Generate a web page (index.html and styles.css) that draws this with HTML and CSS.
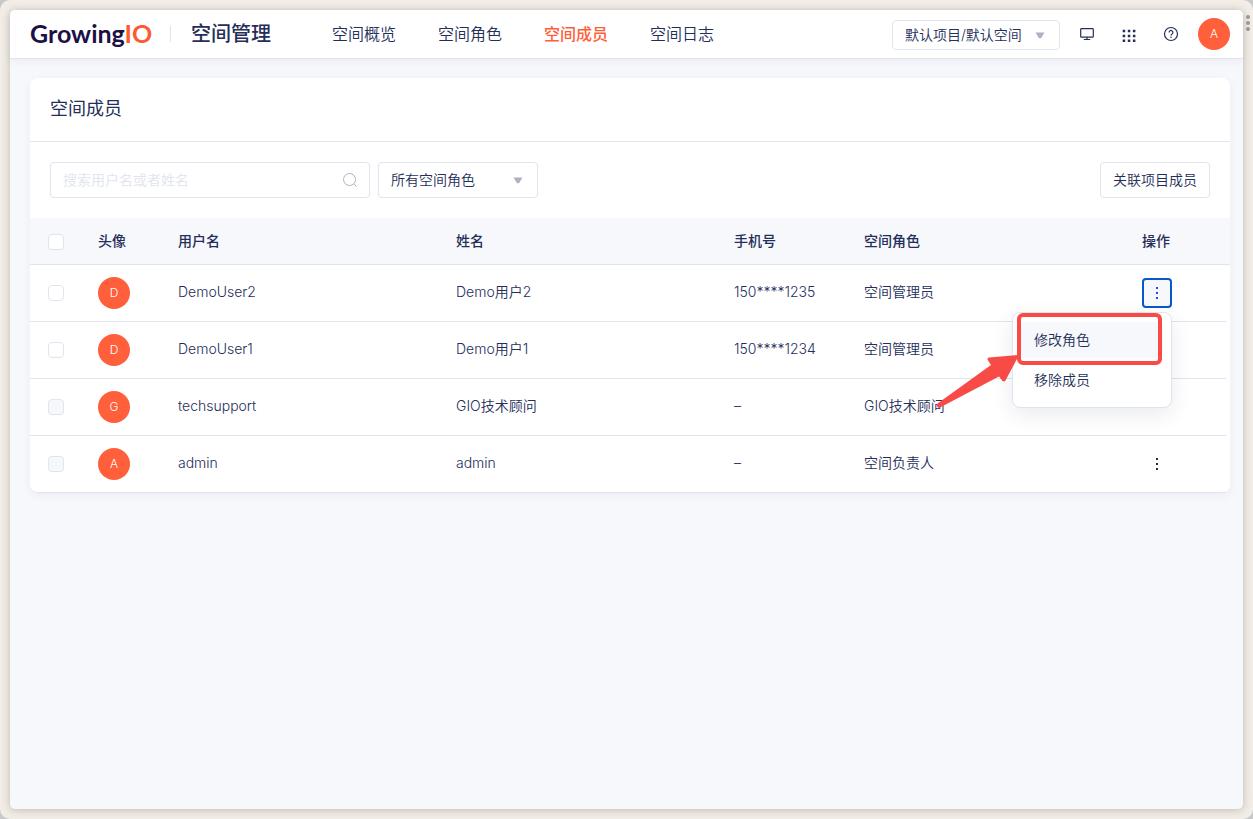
FILE: index.html
```html
<!DOCTYPE html>
<html lang="zh-CN">
<head>
<meta charset="utf-8">
<title>空间成员 - GrowingIO</title>
<link rel="stylesheet" href="styles.css">
</head>
<body>
<div class="frame">
  <svg class="frame-dots" width="4" height="18" viewBox="0 0 4 18" aria-hidden="true"><circle cx="2" cy="2" r="2"/><circle cx="2" cy="8" r="2"/><circle cx="2" cy="14" r="2"/></svg>
  <div class="window">
    <header class="topbar">
      <a class="logo" href="#">Growing<span class="logo-io">IO</span></a>
      <span class="product">空间管理</span>
      <nav class="nav">
        <a class="nav-link" href="#">空间概览</a>
        <a class="nav-link" href="#">空间角色</a>
        <a class="nav-link nav-active" href="#" aria-current="page">空间成员</a>
        <a class="nav-link" href="#">空间日志</a>
      </nav>
      <div class="tools">
        <span class="select-box project-select">
          <select class="select" aria-label="项目空间"><option>默认项目/默认空间</option></select>
          <svg class="caret" width="10" height="7" viewBox="0 0 10 7" aria-hidden="true"><path d="M.5.500h9L6 6.200H4z"/></svg>
        </span>
        <button class="icon-button" aria-label="大屏"><svg width="16" height="16" viewBox="0 0 16 16"><path class="line" d="M2.500 2.600h11a.8.8 0 0 1 .8.8v7a.8.8 0 0 1-.8.8h-11a.8.8 0 0 1-.8-.8v-7a.8.8 0 0 1 .8-.8zM8 11.200v2.300M4.800 13.500h6.400"/></svg></button>
        <button class="icon-button" aria-label="应用"><svg width="16" height="16" viewBox="0 0 16 16"><path class="solid" d="M1.700 3.700h2.500v2.500H1.700zM6.800 3.700h2.500v2.500H6.800zM11.900 3.700h2.500v2.500h-2.500zM1.700 8.700h2.500v2.500H1.700zM6.800 8.700h2.500v2.500H6.800zM11.900 8.700h2.500v2.500h-2.500zM1.700 13.400h2.500v2.500H1.700zM6.800 13.400h2.500v2.500H6.800zM11.900 13.400h2.500v2.500h-2.500z"/></svg></button>
        <button class="icon-button" aria-label="帮助"><svg width="16" height="16" viewBox="0 0 16 16"><circle class="line" cx="8" cy="8" r="6.500"/><path class="line" d="M6.100 6.400a1.900 1.900 0 1 1 2.900 1.600c-.7.400-1 .7-1 1.500"/><circle class="solid" cx="8" cy="11.200" r=".8"/></svg></button>
        <button class="avatar" aria-label="账户">A</button>
      </div>
    </header>
    <main class="content">
      <section class="card">
        <h1 class="card-title">空间成员</h1>
        <div class="filters">
          <label class="search">
            <input class="search-input" type="text" placeholder="搜索用户名或者姓名" aria-label="搜索用户名或者姓名">
            <svg width="16" height="16" viewBox="0 0 16 16" aria-hidden="true"><circle cx="7.500" cy="7.500" r="6"/><path d="M11.600 11.800l3 2.700"/></svg>
          </label>
          <span class="select-box role-select">
            <select class="select" aria-label="空间角色"><option>所有空间角色</option></select>
            <svg class="caret" width="10" height="7" viewBox="0 0 10 7" aria-hidden="true"><path d="M.5.500h9L6 6.200H4z"/></svg>
          </span>
          <button class="link-members">关联项目成员</button>
        </div>
        <table class="members">
          <colgroup><col class="col-check"><col class="col-avatar"><col><col><col class="col-phone"><col><col class="col-action"></colgroup>
          <thead>
            <tr><th class="check-cell"><input class="check" type="checkbox" aria-label="全选"></th><th>头像</th><th>用户名</th><th>姓名</th><th>手机号</th><th>空间角色</th><th>操作</th></tr>
          </thead>
          <tbody>
            <tr><td class="check-cell"><input class="check" type="checkbox" aria-label="选择 DemoUser2"></td><td class="avatar-cell"><span class="avatar">D</span></td><td>DemoUser2</td><td>Demo用户2</td><td>150****1235</td><td>空间管理员</td>
              <td><div class="action">
                <button class="more more-open" aria-label="更多操作" aria-expanded="true"><svg width="4" height="14" viewBox="0 0 4 14"><path d="M1 1h2v2H1zM1 6h2v2H1zM1 11h2v2H1z"/></svg></button>
                <div class="menu">
                  <button class="menu-item menu-hover">修改角色</button>
                  <button class="menu-item">移除成员</button>
                  <span class="callout"></span>
                  <svg class="arrow" width="84" height="56" viewBox="0 0 84 56" aria-hidden="true"><path d="M83 2L53 4.500q-2 .5-1.300 2.500l3.300 5L1.500 50.500q-2 3 1.500 4.500L63 23.500l3.500 4.500q2 1 3-.5z"/></svg>
                </div>
              </div></td></tr>
            <tr><td class="check-cell"><input class="check" type="checkbox" aria-label="选择 DemoUser1"></td><td class="avatar-cell"><span class="avatar">D</span></td><td>DemoUser1</td><td>Demo用户1</td><td>150****1234</td><td>空间管理员</td><td></td></tr>
            <tr><td class="check-cell"><input class="check" type="checkbox" disabled aria-label="选择 techsupport"></td><td class="avatar-cell"><span class="avatar">G</span></td><td>techsupport</td><td>GIO技术顾问</td><td>–</td><td>GIO技术顾问</td><td></td></tr>
            <tr><td class="check-cell"><input class="check" type="checkbox" disabled aria-label="选择 admin"></td><td class="avatar-cell"><span class="avatar">A</span></td><td>admin</td><td>admin</td><td>–</td><td>空间负责人</td>
              <td><div class="action"><button class="more" aria-label="更多操作"><svg width="4" height="14" viewBox="0 0 4 14"><path d="M1 1h2v2H1zM1 6h2v2H1zM1 11h2v2H1z"/></svg></button></div></td></tr>
          </tbody>
        </table>
      </section>
    </main>
  </div>
</div>
</body>
</html>
```
FILE: styles.css
```css
* { box-sizing: border-box; }

html { background: #c9c9c9; }

body {
  margin: 0;
  color: #242e59;
  font: 350 14px/20px Inter, "Noto Sans CJK SC", sans-serif;
}

button, input, select { font: inherit; color: inherit; }
button { padding: 0; border: 0; background: none; }
a { color: inherit; text-decoration: none; }

.frame {
  position: relative;
  display: flex;
  min-height: 100vh;
  padding: 10px;
  border-radius: 10px;
  background: #f2ede7;
}

.frame-dots { position: absolute; top: 15px; right: 3px; fill: #999793; }

.window {
  flex: 1;
  min-width: 0;
  border-radius: 5px;
  background: #f7f8fc;
  box-shadow: 0 1px 8px rgba(70, 55, 40, .28);
}

.topbar {
  display: flex;
  align-items: center;
  height: 49px;
  padding: 0 13px 0 20px;
  border-bottom: 1px solid #dfe4ee;
  border-radius: 5px 5px 0 0;
  background: #fff;
  box-shadow: 0 2px 8px rgba(36, 46, 89, .06);
}

.logo {
  width: 120px;
  padding-bottom: 2px;
  color: #1c1145;
  font: 700 25px/32px Lato, sans-serif;
  white-space: nowrap;
}
.logo-io { color: #fc5a30; }

.product {
  margin-left: 20px;
  padding-left: 20px;
  border-left: 1px solid #dfe4ee;
  font-size: 20px;
  font-weight: 500;
  line-height: 16px;
}

.nav { display: flex; gap: 42px; margin-left: 61px; font-size: 16px; line-height: 24px; }
.nav-active { color: #ff5f3a; font-weight: 500; }

.tools { display: flex; align-items: center; gap: 10px; margin-left: auto; }

.select-box { position: relative; display: block; }
.select {
  width: 100%;
  height: 100%;
  padding: 0 12px;
  border: 1px solid #dfe4ee;
  border-radius: 4px;
  background: #fff;
  appearance: none;
}
.caret { position: absolute; top: calc(50% - 3px); right: 15px; fill: #adb2c2; pointer-events: none; }
.project-select { width: 168px; height: 30px; margin: 2px 1px 0 0; }
.role-select { width: 160px; height: 36px; }

.icon-button { display: grid; place-items: center; width: 32px; height: 32px; }
.line { fill: none; stroke: #242e59; stroke-width: 1.2; }
.solid { fill: #242e59; }

.avatar {
  display: grid;
  place-items: center;
  width: 32px;
  height: 32px;
  border-radius: 50%;
  background: #ff5f3a;
  color: #fff;
  font-size: 12px;
}
.icon-button + .avatar { margin-left: 1px; }

.content { padding: 19px 13px 20px 20px; }

.card {
  border-radius: 8px;
  background: #fff;
  box-shadow: 0 2px 10px rgba(36, 46, 89, .06);
}

.card-title {
  margin: 0;
  padding: 18px 20px 19px;
  border-bottom: 1px solid #dfe4ee;
  font-size: 18px;
  font-weight: 400;
  line-height: 26px;
}

.filters { display: flex; gap: 8px; padding: 20px; }

.search {
  display: flex;
  align-items: center;
  width: 320px;
  height: 36px;
  padding: 0 11px 0 12px;
  border: 1px solid #dfe4ee;
  border-radius: 4px;
}
.search-input { flex: 1; min-width: 0; padding: 0; border: 0; outline: 0; background: none; }
.search-input::placeholder { color: #dfe4ee; }
.search svg { fill: none; stroke: #adb2c2; }

.link-members {
  height: 36px;
  margin-left: auto;
  padding: 0 12px;
  border: 1px solid #dfe4ee;
  border-radius: 4px;
}

.members { width: 100%; border-spacing: 0; table-layout: fixed; }
.col-check { width: 52px; }
.col-avatar { width: 80px; }
.col-phone { width: 130px; }
.col-action { width: 104px; }

.members th, .members td { padding: 0 16px; text-align: left; }
.members th {
  height: 47px;
  border-bottom: 1px solid #dfe4ee;
  background: #f7f8fc;
  font-weight: 500;
}
.members td {
  height: 57px;
  padding-bottom: 2px;
  border-bottom: 1px solid #dfe4ee;
}
.members td:last-child {
  border-bottom: 0;
  background: linear-gradient(#dfe4ee, #dfe4ee) left bottom / calc(100% - 4px) 1px no-repeat;
}
.members tr:last-child td:first-child { border-bottom-left-radius: 8px; }
.members .avatar-cell { padding-bottom: 0; }
.members .check-cell { padding: 0 0 0 18px; }
.members th.check-cell { padding-top: 2px; }

.check {
  display: block;
  width: 16px;
  height: 16px;
  margin: 0;
  border: 1px solid #dfe4ee;
  border-radius: 4px;
  background: #fff;
  appearance: none;
}
.check:disabled { background: #f7f8fc; }

.action { position: relative; width: 30px; }

.more { display: grid; place-items: center; width: 30px; height: 30px; border-radius: 4px; }
.more svg { fill: #242e59; }
.more-open { border: 2px solid #0858c8; background: #f7f8fc; }
.more-open svg { fill: #1f45ff; }

.menu {
  position: absolute;
  top: 34px;
  right: 0;
  z-index: 1;
  display: grid;
  gap: 4px;
  width: 160px;
  padding: 9px 8px;
  border: 1px solid #dfe4ee;
  border-radius: 8px;
  background: #fff;
  box-shadow: 0 6px 20px rgba(36, 46, 89, .1);
}
.menu-item { height: 36px; padding: 0 13px; border-radius: 4px; text-align: left; }
.menu-hover { background: #f7f8fc; }

.callout {
  position: absolute;
  top: 0;
  left: 4px;
  width: 145px;
  height: 52px;
  border: 4px solid #f84b48;
  border-radius: 6px;
}
.arrow { position: absolute; top: 40px; left: -77px; fill: #f84b48; }
```
